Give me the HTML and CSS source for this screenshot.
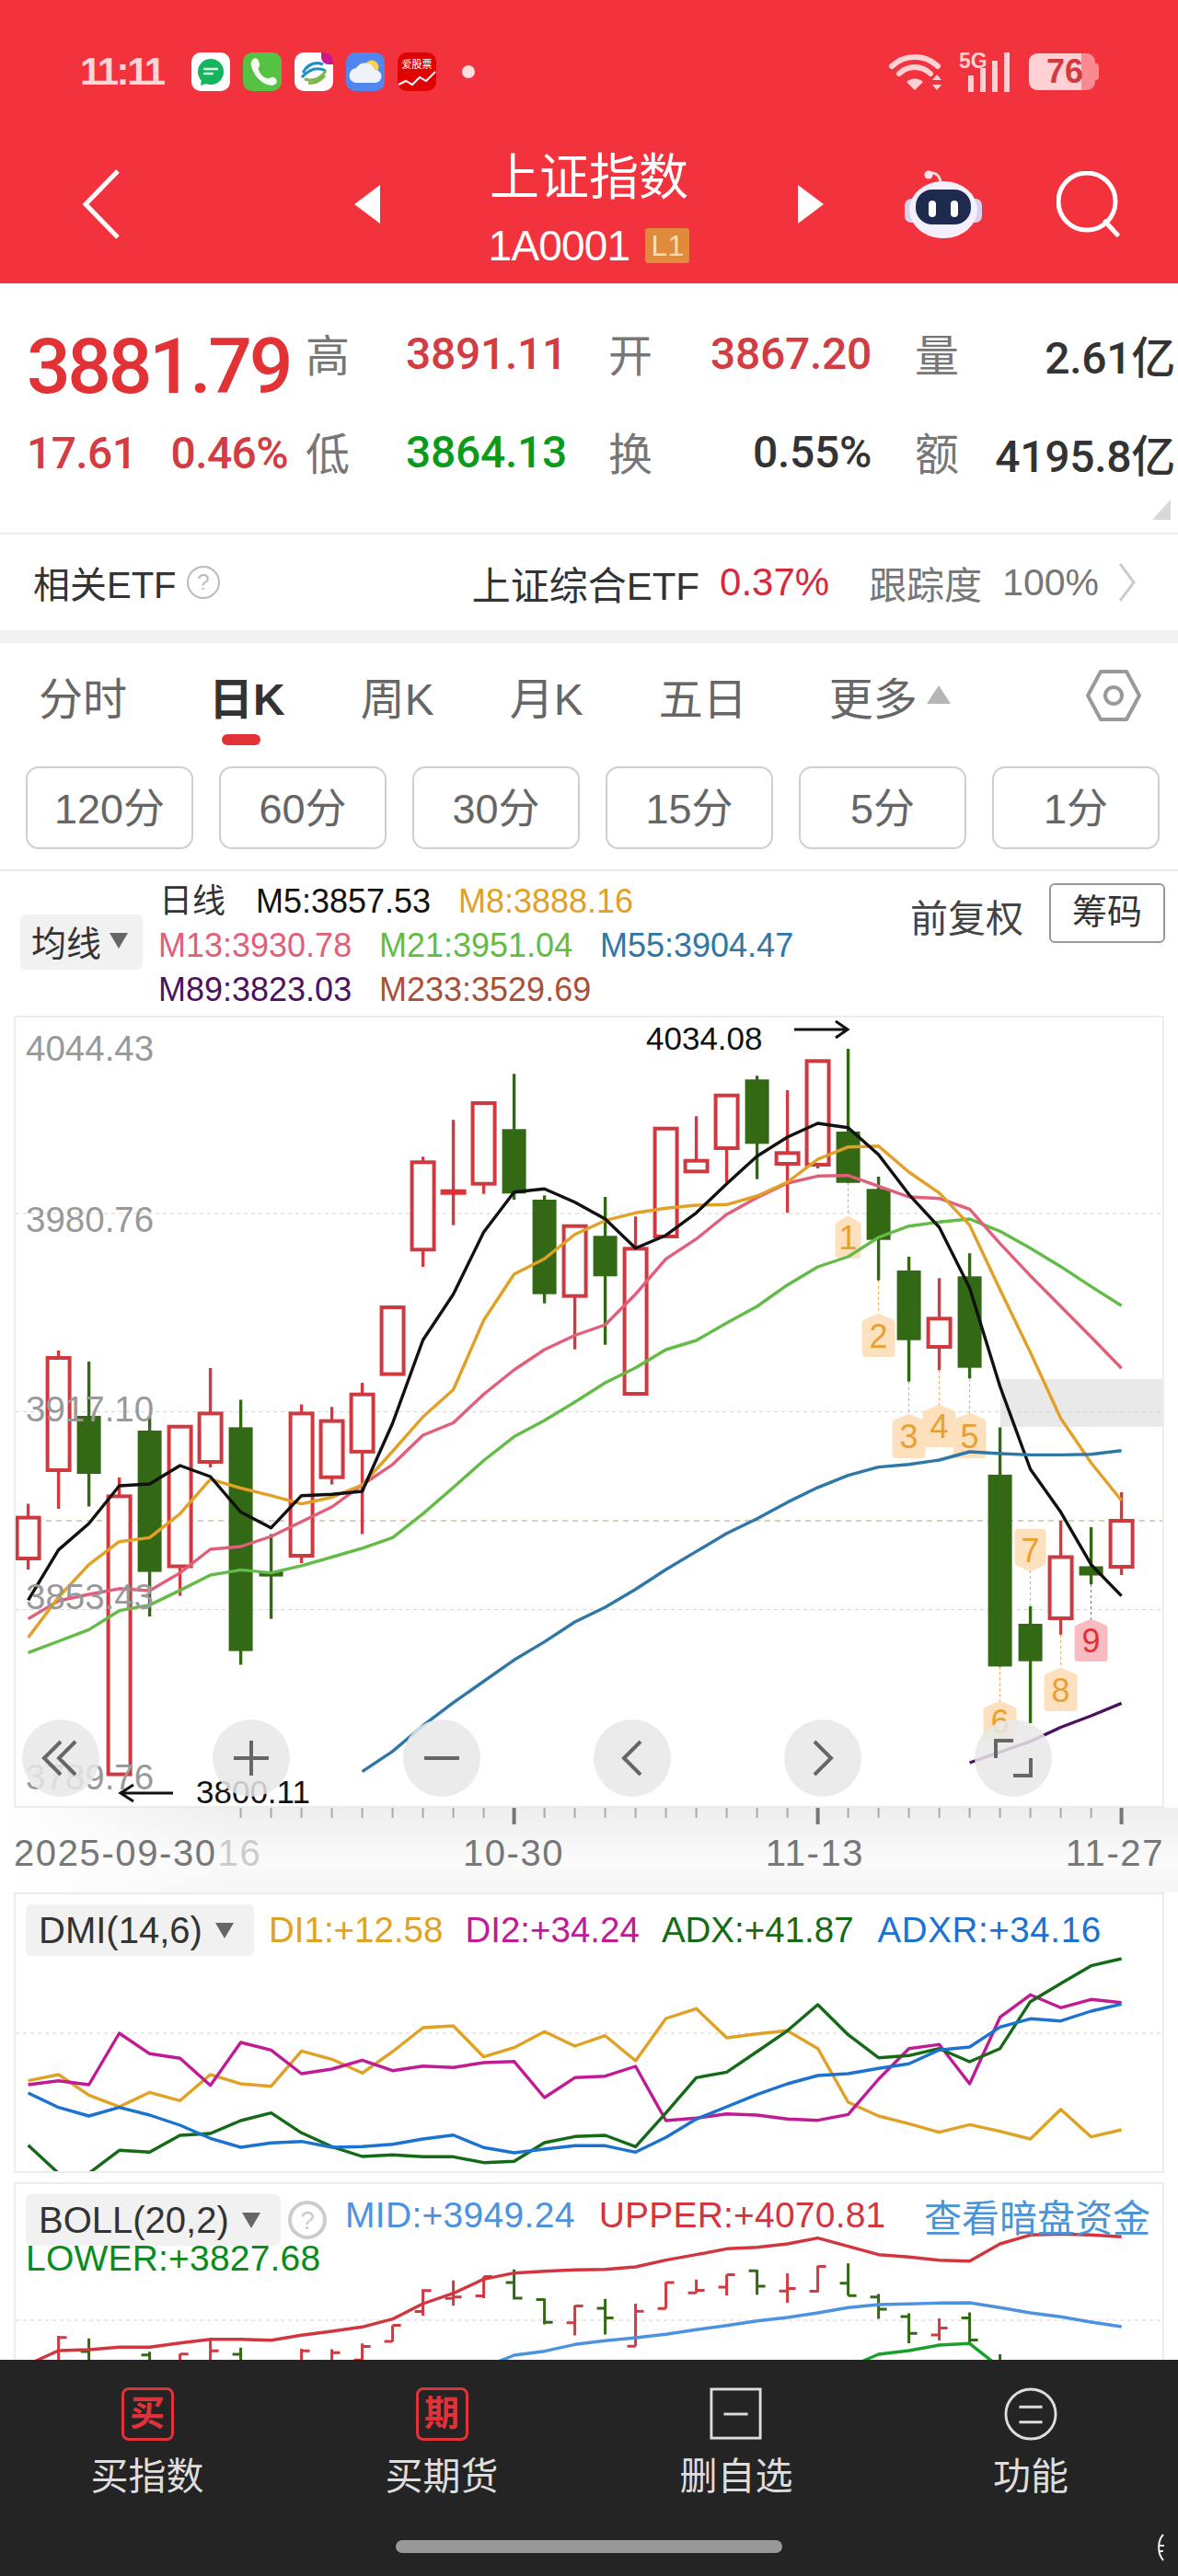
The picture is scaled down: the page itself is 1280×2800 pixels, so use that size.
FILE: index.html
```html
<!DOCTYPE html>
<html lang="zh-CN">
<head>
    <meta charset="UTF-8">
    <meta name="viewport" content="width=device-width, initial-scale=1.0">
    <title>上证指数</title>
    <link rel="stylesheet" href="styles.css">
</head>
<body>
<div class="page">

    <header class="top">
        <div class="status">
            <span class="time">11:11</span>
            <div class="notify">
                <svg class="app" viewBox="0 0 42 42"><rect width="42" height="42" rx="10" fill="#fff"/><circle cx="21" cy="21" r="14" fill="#14b55c"/><path d="M11 30l-1 6 8-3z" fill="#14b55c"/><path d="M14 18h14M14 23h9" stroke="#d8f5e4" stroke-width="2.4" stroke-linecap="round"/></svg>
                <svg class="app" viewBox="0 0 42 42"><rect width="42" height="42" rx="10" fill="#55c244"/><path d="M11 7c4-2 6 1 7 5 1 3-2 4-1 7 2 5 5 8 9 9 3 1 4-2 7-1 3 1 5 4 3 7-3 3-9 2-14-1-6-4-11-11-13-18-1-3 0-6 2-8z" fill="#f3fbf0"/></svg>
                <svg class="app" viewBox="0 0 42 42"><rect width="42" height="42" rx="10" fill="#fff"/><path d="M29 0h4a9 9 0 0 1 9 9v4h-5a8 8 0 0 1-8-8z" fill="#d0168c"/><path d="M9 22c6-10 14-12 22-9M8 27c8-9 16-12 26-7" fill="none" stroke="#1c8fc4" stroke-width="3"/><path d="M34 20c-6 9-13 12-23 9M33 25c-6 7-11 9-18 8" fill="none" stroke="#7ab648" stroke-width="3"/></svg>
                <svg class="app" viewBox="0 0 42 42"><rect width="42" height="42" rx="10" fill="#4f86f0"/><circle cx="28" cy="16" r="7.5" fill="#f6cf55"/><path d="M12 33a8 8 0 0 1-1-16 11 11 0 0 1 20 2 7 7 0 0 1 1 14z" fill="#eef3fb"/></svg>
                <svg class="app" viewBox="0 0 42 42"><rect width="42" height="42" rx="10" fill="#e00303"/><text class="app-word" x="21" y="17" text-anchor="middle">爱股票</text><path d="M1 35l8-4 7 4 8-8 7 4 10-10" fill="none" stroke="#fff" stroke-width="2"/></svg>
            </div>
            <span class="status-dot"></span>
            <div class="signals">
                <svg class="wifi" viewBox="0 0 58 42"><path d="M3 15a36 36 0 0 1 50 0M11 23a24 24 0 0 1 34 0" fill="none" stroke="#ffd0d4" stroke-width="6" stroke-linecap="round"/><path d="M19 32a13 13 0 0 1 18 0l-9 9z" fill="#ffd0d4"/><path d="M52 24l5 6H47zM52 41l5-6H47z" fill="#ffd0d4"/></svg>
                <svg class="bars" viewBox="0 0 56 44"><text class="bars-word" x="0" y="18">5G</text><path d="M10 44V26h6v18zM23 44V18h6v26zM36 44V10h6v34zM49 44V1h6v43z" fill="#ffd0d4"/></svg>
                <div class="battery"><span class="battery-num">76</span></div>
            </div>
        </div>

        <nav class="bar">
            <div class="bar-left">
                <svg class="back" viewBox="0 0 40 76"><path d="M38 2L3 38l35 36" fill="none" stroke="#fff" stroke-width="5"/></svg>
            </div>
            <div class="switch">
                <span class="tri-left"></span>
                <div class="title">
                    <div class="title-name">上证指数</div>
                    <div class="title-code">1A0001<span class="level">L1</span></div>
                </div>
                <span class="tri-right"></span>
            </div>
            <div class="bar-right">
                <svg class="robot" viewBox="0 0 84 76"><path d="M26 5c6-3 12 1 13 9" fill="none" stroke="#f3dfe4" stroke-width="3"/><circle cx="26" cy="6" r="4.5" fill="#f4e6ea"/><rect x="0" y="32" width="84" height="26" rx="7" fill="#d8d2ee"/><ellipse cx="42" cy="44" rx="37" ry="31" fill="#f3effb"/><rect x="12" y="22" width="60" height="38" rx="18" fill="#1e2a4e"/><rect x="26" y="34" width="8" height="18" rx="4" fill="#fff"/><rect x="50" y="34" width="8" height="18" rx="4" fill="#fff"/></svg>
                <svg class="search" viewBox="0 0 70 72"><circle cx="33" cy="33" r="31" fill="none" stroke="#fff" stroke-width="5"/><path d="M53 55l13 14" stroke="#fff" stroke-width="5" stroke-linecap="round"/></svg>
            </div>
        </nav>
    </header>

    <section class="quote">
        <div class="price">3881.79</div>
        <div class="label">高</div><div class="val up">3891.11</div>
        <div class="label">开</div><div class="val end up">3867.20</div>
        <div class="label">量</div><div class="val last dark">2.61亿</div>

        <div class="change"><span>17.61</span><span>0.46%</span></div>
        <div class="label">低</div><div class="val down">3864.13</div>
        <div class="label">换</div><div class="val end dark">0.55%</div>
        <div class="label">额</div><div class="val last dark">4195.8亿</div>
        <span class="corner"></span>
    </section>

    <section class="etf">
        <div class="etf-left">相关ETF
            <svg class="hint" viewBox="0 0 38 38"><circle cx="19" cy="19" r="17" fill="none" stroke="#bbb" stroke-width="2"/><text class="hint-mark" x="19" y="27" text-anchor="middle">?</text></svg>
        </div>
        <div class="etf-right">
            <span class="etf-name">上证综合ETF</span>
            <span class="etf-pct">0.37%</span>
            <span class="etf-track">跟踪度</span>
            <span class="etf-num">100%</span>
            <svg class="more" viewBox="0 0 20 44"><path d="M2 2l15 20L2 42" fill="none" stroke="#ccc" stroke-width="3"/></svg>
        </div>
    </section>

    <div class="band"></div>

    <section class="tabs">
        <span class="tab first">分时</span>
        <span class="tab active">日K</span>
        <span class="tab">周K</span>
        <span class="tab">月K</span>
        <span class="tab">五日</span>
        <span class="tab wide">更多<i class="tri-up"></i></span>
        <svg class="gear" viewBox="0 0 60 58"><path d="M16 3h28l14 26-14 26H16L2 29z" fill="none" stroke="#999" stroke-width="4" stroke-linejoin="round"/><circle cx="30" cy="29" r="9" fill="none" stroke="#999" stroke-width="4"/></svg>
    </section>

    <section class="periods">
        <span class="period">120分</span>
        <span class="period">60分</span>
        <span class="period">30分</span>
        <span class="period">15分</span>
        <span class="period">5分</span>
        <span class="period">1分</span>
    </section>

    <section class="ma-head">
        <div class="select ma-select">均线<i class="tri-down"></i></div>
        <div class="ma-list">
            <div class="ma-row"><span class="ma-day">日线</span><span class="ma-five t-m5">M5:3857.53</span><span class="t-m8">M8:3888.16</span></div>
            <div class="ma-row"><span class="t-m13">M13:3930.78</span><span class="t-m21">M21:3951.04</span><span class="t-m55">M55:3904.47</span></div>
            <div class="ma-row"><span class="t-m89">M89:3823.03</span><span class="t-m233">M233:3529.69</span></div>
        </div>
        <div class="ma-side">
            <span class="adjust">前复权</span>
            <span class="chips">筹码</span>
        </div>
    </section>

    <section class="frame kline-frame">
        <svg id="kline" class="kline" viewBox="17 1106 1246 857"></svg>
        <div class="tools">
            <span class="tool"><svg viewBox="0 0 44 44"><path d="M22 4L4 22l18 18M38 4L20 22l18 18" fill="none" stroke="#666" stroke-width="4"/></svg></span>
            <span class="tool"><svg viewBox="0 0 44 44"><path d="M22 3v38M3 22h38" fill="none" stroke="#666" stroke-width="4"/></svg></span>
            <span class="tool"><svg viewBox="0 0 44 44"><path d="M3 22h38" fill="none" stroke="#666" stroke-width="4"/></svg></span>
            <span class="tool"><svg viewBox="0 0 44 44"><path d="M31 4L13 22l18 18" fill="none" stroke="#666" stroke-width="4"/></svg></span>
            <span class="tool"><svg viewBox="0 0 44 44"><path d="M13 4l18 18-18 18" fill="none" stroke="#666" stroke-width="4"/></svg></span>
            <span class="tool"><svg viewBox="0 0 44 44"><path d="M22 3H3v19M22 41h19V22" fill="none" stroke="#666" stroke-width="4"/></svg></span>
        </div>
    </section>

    <section class="axis">
        <svg id="ticks" class="ticks" viewBox="0 0 1280 20"></svg>
        <div class="dates">
            <span>2025-09-30<em class="faded">16</em></span>
            <span>10-30</span>
            <span>11-13</span>
            <span>11-27</span>
        </div>
    </section>

    <section class="frame dmi-frame">
        <div class="legend">
            <div class="select dmi-select">DMI(14,6)<i class="tri-down"></i></div>
            <span class="t-di1">DI1:+12.58</span>
            <span class="t-di2">DI2:+34.24</span>
            <span class="t-adx">ADX:+41.87</span>
            <span class="t-adxr">ADXR:+34.16</span>
        </div>
        <svg id="dmi" class="dmi" viewBox="17 2126 1246 234"></svg>
    </section>

    <section class="frame boll-frame">
        <svg id="boll" class="boll" viewBox="17 2374 1246 230"></svg>
        <div class="boll-legend">
            <div class="boll-line">
                <div class="select boll-select">BOLL(20,2)<i class="tri-down"></i></div>
                <svg class="boll-hint" viewBox="0 0 44 44"><circle cx="22" cy="22" r="19" fill="none" stroke="#ccc" stroke-width="4"/><text class="boll-mark" x="22" y="32" text-anchor="middle">?</text></svg>
                <span class="t-mid">MID:+3949.24</span>
                <span class="t-upper">UPPER:+4070.81</span>
                <span class="dark-pool">查看暗盘资金</span>
            </div>
            <div class="t-lower">LOWER:+3827.68</div>
        </div>
    </section>

    <footer class="actions">
        <div class="action">
            <span class="act-box act-red">买</span>
            <span class="act-name">买指数</span>
        </div>
        <div class="action">
            <span class="act-box act-red">期</span>
            <span class="act-name">买期货</span>
        </div>
        <div class="action">
            <svg class="act-icon" viewBox="0 0 60 60"><rect x="2" y="2" width="55" height="55" fill="none" stroke="#ddd" stroke-width="3"/><path d="M16 30h27" stroke="#ddd" stroke-width="3"/></svg>
            <span class="act-name">删自选</span>
        </div>
        <div class="action">
            <svg class="act-icon" viewBox="0 0 60 60"><circle cx="30" cy="30" r="28" fill="none" stroke="#ddd" stroke-width="3"/><path d="M17 22h26M17 39h26" stroke="#ddd" stroke-width="3"/></svg>
            <span class="act-name">功能</span>
        </div>
        <span class="home-bar"></span>
        <svg class="corner-mark" viewBox="0 0 12 32"><path d="M10 2C4 8 3 22 10 30M6 14h5M6 20h4" fill="none" stroke="#eee" stroke-width="2"/></svg>
    </footer>
</div>
<script src="chart.js"></script>
</body>
</html>
```

FILE: styles.css
```css
* {
    box-sizing: border-box;
}

body {
    margin: 0;
    background: #fff;
    font-family: "Liberation Sans", "Noto Sans CJK SC", sans-serif;
}

.page {
    position: relative;
    width: 1280px;
    height: 2800px;
    overflow: hidden;
}

i {
    font-style: normal;
}

/* red header */
.top {
    height: 308px;
    padding-top: 48px;
    background: #f2323c;
}

.status {
    display: flex;
    align-items: center;
    height: 60px;
    padding: 0 90px 0 87px;
}

.time {
    width: 90px;
    font-size: 42px;
    font-weight: bold;
    letter-spacing: -2.4px;
    color: #ffd5d8;
    white-space: nowrap;
}

.notify {
    display: flex;
    gap: 14px;
    margin-left: 31px;
}

.app {
    width: 42px;
    height: 42px;
}

.app-word {
    font-size: 11px;
    fill: #fff;
}

.status-dot {
    width: 14px;
    height: 14px;
    margin-left: 28px;
    border-radius: 50%;
    background: #ffdfe0;
}

.signals {
    display: flex;
    align-items: center;
    margin-left: auto;
}

.wifi {
    width: 58px;
    height: 42px;
}

.bars {
    width: 56px;
    height: 44px;
    margin-left: 18px;
    overflow: visible;
}

.bars-word {
    font-size: 23px;
    font-weight: bold;
    fill: #ffd0d4;
}

.battery {
    position: relative;
    width: 72px;
    height: 40px;
    margin-left: 20px;
    border-radius: 9px;
    background: linear-gradient(90deg, #ffd0d4 0 79%, #f98a90 79%);
    text-align: center;
}

.battery::after {
    content: "";
    position: absolute;
    right: -4px;
    top: 11px;
    width: 4px;
    height: 18px;
    border-radius: 0 3px 3px 0;
    background: #f98a90;
}

.battery-num {
    padding-left: 6px;
    font-size: 36px;
    line-height: 40px;
    font-weight: bold;
    color: #d23a42;
}

.bar {
    display: grid;
    grid-template-columns: 385px 510px 1fr;
    align-items: center;
    height: 200px;
    padding-top: 28px;
}

.bar-left {
    padding-left: 90px;
}

.back {
    display: block;
    width: 40px;
    height: 76px;
}

.switch {
    display: flex;
    align-items: center;
    justify-content: space-between;
}

.tri-left,
.tri-right {
    width: 0;
    height: 0;
    border-top: 21px solid transparent;
    border-bottom: 21px solid transparent;
}

.tri-left {
    border-right: 28px solid #fff;
}

.tri-right {
    border-left: 28px solid #fff;
}

.title {
    margin-top: 16px;
    color: #fff;
    text-align: center;
}

.title-name {
    font-size: 54px;
    line-height: 68px;
}

.title-code {
    display: flex;
    align-items: center;
    justify-content: center;
    margin-top: 6px;
    height: 68px;
    font-size: 46px;
    letter-spacing: -0.8px;
}

.level {
    width: 48px;
    height: 38px;
    margin-left: 17px;
    border-radius: 3px;
    background: #e08a3c;
    font-size: 32px;
    line-height: 38px;
    letter-spacing: 0;
    text-align: center;
    color: #f8dcb6;
}

.bar-right {
    display: flex;
    align-items: center;
    padding-left: 88px;
}

.robot {
    width: 84px;
    height: 76px;
}

.search {
    width: 70px;
    height: 72px;
    margin-left: 81px;
}

/* quote table */
.quote {
    position: relative;
    display: grid;
    grid-template-columns: 303px 109px 220px 60px 273px 60px 223px;
    grid-auto-rows: 107px;
    align-items: center;
    height: 273px;
    padding: 24px 0 0 29px;
    border-bottom: 2px solid #eee;
}

.price {
    height: 107px;
    font-family: Roboto, "Liberation Sans", sans-serif;
    font-size: 84px;
    line-height: 133px;
    font-weight: 500;
    letter-spacing: -3.4px;
    color: #e23236;
    white-space: nowrap;
}

.change {
    display: flex;
    justify-content: space-between;
    width: 284px;
    font-family: Roboto, "Liberation Sans", sans-serif;
    font-size: 48px;
    letter-spacing: -0.6px;
    font-weight: 500;
    color: #d23c42;
}

.label {
    margin-top: -5px;
    font-size: 48px;
    color: #777;
}

.val {
    margin-top: -2px;
    font-family: Roboto, "Liberation Sans", "Noto Sans CJK SC", sans-serif;
    font-size: 48px;
    font-weight: 500;
    letter-spacing: -0.3px;
    white-space: nowrap;
}

.val.end {
    padding-right: 47px;
    text-align: right;
}

.val.last {
    text-align: right;
}

.up {
    color: #d23c42;
}

.down {
    color: #0a9a1c;
}

.dark {
    color: #333;
}

.corner {
    position: absolute;
    right: 8px;
    bottom: 14px;
    width: 0;
    height: 0;
    border-left: 20px solid transparent;
    border-bottom: 22px solid #d8d8d8;
}

/* related etf */
.etf {
    display: flex;
    align-items: center;
    justify-content: space-between;
    height: 104px;
    padding: 0 45px 0 36px;
    font-size: 40px;
}

.etf-left {
    display: flex;
    align-items: center;
    color: #333;
}

.hint {
    width: 38px;
    height: 38px;
    margin-left: 10px;
}

.hint-mark {
    font-size: 24px;
    fill: #bbb;
}

.etf-right {
    display: flex;
    align-items: center;
}

.etf-name {
    font-size: 42px;
    color: #333;
}

.etf-pct {
    margin-left: 22px;
    font-size: 42px;
    color: #d8283c;
}

.etf-track {
    margin-left: 43px;
    font-size: 41px;
    color: #777;
}

.etf-num {
    margin-left: 22px;
    font-size: 41px;
    color: #777;
}

.more {
    width: 20px;
    height: 44px;
    margin-left: 21px;
}

.band {
    height: 14px;
    background: #f3f3f3;
}

/* period tabs */
.tabs {
    display: flex;
    align-items: center;
    gap: 82px;
    height: 134px;
    padding: 0 0 20px 42px;
    font-size: 48px;
    color: #666;
}

.tab {
    position: relative;
    white-space: nowrap;
}

.tab.active {
    margin-left: 7px;
    font-weight: bold;
    color: #333;
}

.tab.active::after {
    content: "";
    position: absolute;
    left: 14px;
    bottom: -19px;
    width: 42px;
    height: 12px;
    border-radius: 6px;
    background: #e13238;
}

.tab.wide {
    margin-left: 7px;
}

.tri-up {
    display: inline-block;
    vertical-align: 12px;
    width: 0;
    height: 0;
    margin-left: 10px;
    border-left: 13px solid transparent;
    border-right: 13px solid transparent;
    border-bottom: 20px solid #b5b5b5;
}

.gear {
    width: 60px;
    height: 58px;
    margin-left: auto;
    margin-right: 40px;
}

.periods {
    display: flex;
    gap: 28px;
    height: 114px;
    padding: 0 20px 22px 28px;
    border-bottom: 2px solid #e8e8e8;
}

.period {
    flex: 1;
    border: 2px solid #cfcfcf;
    border-radius: 14px;
    font-size: 45px;
    line-height: 90px;
    text-align: center;
    color: #666;
}

/* moving average legend */
.ma-head {
    position: relative;
    display: flex;
    height: 157px;
    padding: 9px 14px 0 22px;
}

.select {
    display: flex;
    align-items: center;
    border-radius: 6px;
    background: #f1f1f1;
    color: #333;
    white-space: nowrap;
}

.tri-down {
    display: inline-block;
    width: 0;
    height: 0;
    border-left: 10px solid transparent;
    border-right: 10px solid transparent;
    border-top: 17px solid #666;
}

.ma-select {
    width: 133px;
    height: 60px;
    margin-top: 38px;
    padding: 0 0 4px 12px;
    font-size: 38px;
}

.ma-select .tri-down {
    margin-left: 9px;
}

.ma-list {
    margin-left: 17px;
    font-size: 36px;
    line-height: 48px;
}

.ma-row {
    display: flex;
}

.ma-row span {
    width: 240px;
    white-space: nowrap;
}

.ma-row .ma-day {
    width: 106px;
    padding-left: 1px;
    color: #333;
}

.ma-row .ma-five {
    width: 220px;
}

.t-m5 { color: #111; }
.t-m8 { color: #e2a126; }
.t-m13 { color: #e25f7b; }
.t-m21 { color: #63bb48; }
.t-m55 { color: #2f78a6; }
.t-m89 { color: #4c1160; }
.t-m233 { color: #a9503a; }

.ma-side {
    display: flex;
    align-items: flex-start;
    margin-left: auto;
}

.adjust {
    margin-top: 9px;
    font-size: 41px;
    color: #444;
}

.chips {
    width: 126px;
    height: 65px;
    margin: 4px 0 0 28px;
    border: 2px solid #999;
    border-radius: 6px;
    font-size: 38px;
    line-height: 59px;
    text-align: center;
    color: #333;
}

/* chart frames */
.frame {
    position: relative;
    margin: 0 15px;
    border: 2px solid #ececec;
}

.kline-frame {
    height: 861px;
}

.kline,
.dmi,
.boll {
    display: block;
    width: 1246px;
}

.kline {
    height: 857px;
}

.dmi {
    height: 234px;
}

.boll {
    height: 230px;
}

.tools {
    position: absolute;
    left: 7px;
    bottom: 10px;
    display: flex;
    gap: 123px;
}

.tool {
    display: flex;
    align-items: center;
    justify-content: center;
    width: 84px;
    height: 84px;
    border-radius: 50%;
    background: rgba(232, 232, 232, 0.85);
}

.tool svg {
    width: 44px;
    height: 44px;
}

/* x axis */
.axis {
    height: 92px;
    padding: 0 15px;
    background:
        linear-gradient(90deg, #fff, rgba(255, 255, 255, 0) 20%),
        linear-gradient(180deg, #eee, #fafafa 60%, #f6f6f6);
}

.ticks {
    display: block;
    width: 1280px;
    height: 20px;
    margin-left: -15px;
}

.dates {
    display: flex;
    justify-content: space-between;
    margin-top: 6px;
    font-size: 40px;
    line-height: 46px;
    letter-spacing: 1.6px;
    color: #777;
}

.faded {
    margin-left: 1px;
    font-style: normal;
    color: #ccc;
}

/* dmi */
.dmi-frame {
    height: 305px;
}

.legend {
    display: flex;
    align-items: center;
    gap: 24px;
    height: 67px;
    padding: 11px 0 0 11px;
    font-size: 38.5px;
    white-space: nowrap;
}

.dmi-select {
    width: 248px;
    height: 56px;
    margin-right: -8px;
    padding-left: 14px;
    font-size: 40px;
}

.dmi-select .tri-down {
    margin-left: 14px;
}

.t-di1 { color: #e0a224; }
.t-di2 { color: #c01b94; }
.t-adx { color: #146a17; }
.t-adxr {
    margin-left: 2px;
    letter-spacing: 0.6px;
    color: #1b72cf;
}

/* boll */
.boll-frame {
    margin-top: 10px;
    height: 300px;
}

.boll-legend {
    position: absolute;
    left: 11px;
    right: 13px;
    top: 11px;
    font-size: 39px;
    white-space: nowrap;
}

.boll-line {
    display: flex;
    align-items: center;
    height: 56px;
}

.boll-select {
    width: 277px;
    height: 56px;
    padding-left: 14px;
    font-size: 40px;
}

.boll-select .tri-down {
    margin-left: 14px;
}

.boll-hint {
    width: 44px;
    height: 44px;
    margin-left: 7px;
}

.boll-mark {
    font-size: 28px;
    fill: #ccc;
}

.t-mid {
    margin: -10px 0 0 19px;
    letter-spacing: 0.3px;
    color: #4d92df;
}

.t-upper {
    margin: -10px 0 0 26px;
    letter-spacing: 0.2px;
    color: #d1353d;
}

.dark-pool {
    margin: -10px 0 0 auto;
    font-size: 41px;
    color: #4a93d6;
}

.t-lower {
    margin-top: -8px;
    line-height: 44px;
    letter-spacing: 0.2px;
    color: #0a8c1c;
}

/* bottom actions */
.actions {
    position: absolute;
    left: 0;
    bottom: 0;
    display: grid;
    grid-template-columns: repeat(4, 320px);
    width: 1280px;
    height: 235px;
    padding-top: 30px;
    background: #242424;
}

.action {
    display: flex;
    flex-direction: column;
    align-items: center;
}

.act-box {
    width: 57px;
    height: 58px;
    border: 3px solid #e0323a;
    border-radius: 8px;
    font-size: 38px;
    line-height: 50px;
    font-weight: bold;
    text-align: center;
    color: #e0323a;
}

.act-icon {
    width: 60px;
    height: 58px;
}

.act-name {
    margin-top: 13px;
    font-size: 41px;
    line-height: 52px;
    color: #ddd;
}

.home-bar {
    position: absolute;
    left: 430px;
    bottom: 25px;
    width: 420px;
    height: 14px;
    border-radius: 7px;
    background: #999;
}

.corner-mark {
    position: absolute;
    right: 14px;
    bottom: 15px;
    width: 12px;
    height: 32px;
}

/* svg parts built in chart.js */
.grid { stroke: #d4d4d4; stroke-width: 1; stroke-dasharray: 4 4; }
.last-price { stroke: #b5a070; stroke-width: 1.2; stroke-dasharray: 6 5; }
.gray-band { fill: #e9e9e9; }
.wick-red { stroke: #d03a40; stroke-width: 3.4; }
.wick-green { stroke: #336814; stroke-width: 3.4; }
.body-red { fill: #fff; stroke: #cf3a40; stroke-width: 4; }
.body-full { fill: #e13036; }
.body-green { fill: #336814; }
.line { fill: none; stroke-width: 3.4; stroke-linejoin: round; }
.l-m5 { stroke: #111; }
.l-m8 { stroke: #e2a126; }
.l-m13 { stroke: #e25f7b; }
.l-m21 { stroke: #63bb48; }
.l-m55 { stroke: #2f78a6; }
.l-m89 { stroke: #4c1160; }
.l-di1 { stroke: #e0a224; }
.l-di2 { stroke: #c01b94; }
.l-adx { stroke: #146a17; }
.l-adxr { stroke: #1b72cf; }
.l-upper { stroke: #d1353d; }
.l-mid { stroke: #4d92df; }
.l-lower { stroke: #19a02a; }
.tag-link { stroke: #e8a040; stroke-width: 1; stroke-dasharray: 3 3; }
.tag-link.hot { stroke: #c44; }
.tag { fill: #fde0bd; stroke: #fde0bd; stroke-width: 8; stroke-linejoin: round; }
.tag.hot { fill: #f8bcc0; stroke: #f8bcc0; }
.tag-num { font-size: 36px; fill: #e8a030; text-anchor: middle; }
.tag-num.hot { fill: #e03038; }
.axis-price { font-size: 38.5px; fill: #999; }
.extreme { font-size: 35px; fill: #111; }
.arrow { fill: none; stroke: #111; stroke-width: 3; }
.tick { stroke: #aaa; stroke-width: 2; }
.tick.major { stroke: #777; stroke-width: 4; }
.bar-red { stroke: #d03a40; stroke-width: 3; fill: none; }
.bar-green { stroke: #336814; stroke-width: 3; fill: none; }
```

FILE: chart.js
```javascript
// x of candle number i, same in all three charts
function cx(i) {
    return 30.6 + 33 * i;
}

// [high, low, body top, body bottom, kind]
const candles = [
    [1634.6, 1706, 1649.6, 1694, "r"], [1468, 1640, 1476, 1598, "r"], [1480, 1637.5, 1539, 1602, "g"],
    [1606, 1929, 1626.4, 1928.6, "r"], [1540, 1757, 1555, 1708.6, "g"], [1550, 1734.6, 1550.7, 1702.5, "r"],
    [1487, 1595, 1536.4, 1589, "r"], [1521.4, 1809.6, 1551.4, 1794.6, "g"], [1667.5, 1759.6, 1708, 1713.6, "g"],
    [1526.4, 1699, 1536.4, 1691, "r"], [1529.3, 1613.6, 1544.6, 1605.7, "r"], [1503, 1667.5, 1515.7, 1577.9, "r"],
    [1421, 1494, 1421, 1493.6, "r"], [1257.3, 1377, 1263.3, 1358.3, "r"], [1217.3, 1331.7, 1292.7, 1298.7, "f"],
    [1199, 1297.7, 1199, 1286.7, "r"], [1167.3, 1304, 1227.3, 1297.3, "g"], [1299.3, 1416.7, 1304, 1406.7, "g"],
    [1331, 1466.7, 1332.7, 1408.7, "r"], [1301, 1461.7, 1343.3, 1387.3, "g"], [1322.3, 1515, 1357.3, 1515, "r"],
    [1225, 1344, 1226.7, 1344, "r"], [1213.3, 1274.3, 1261.7, 1273.3, "r"], [1190.7, 1285, 1190.7, 1248, "r"],
    [1169.3, 1281.7, 1173.3, 1243.3, "g"], [1185, 1318.3, 1253.3, 1265, "r"], [1151.7, 1270, 1153.3, 1266, "r"],
    [1140, 1285.7, 1230, 1285.7, "g"], [1279, 1391.7, 1292.3, 1347.7, "g"], [1366, 1501.7, 1381, 1456.7, "g"],
    [1389.3, 1489.3, 1433.3, 1464, "r"], [1362.3, 1498.3, 1387.3, 1486.7, "g"], [1551.4, 1811.4, 1602.9, 1811.4, "g"],
    [1746, 1873, 1765, 1805.7, "g"], [1653, 1776.8, 1692.5, 1759, "r"], [1660, 1722, 1702.5, 1712.5, "g"],
    [1622, 1712, 1653, 1703, "r"]
];

const maLines = {
    "l-m21": [1796.4, 1784, 1771.4, 1750.7, 1744.6, 1728.6, 1712, 1706.4, 1709.6, 1701.8, 1692.5, 1682.9, 1671.4, 1645.4, 1616.8, 1587.5, 1561.6, 1544, 1524, 1503, 1486.7, 1467, 1457, 1438, 1420, 1396.7, 1377, 1366, 1345, 1332.7, 1328.3, 1325, 1338.3, 1356.7, 1376.7, 1398.3, 1419.3],
    "l-m13": [1759.6, 1740, 1733, 1726.8, 1729, 1709.6, 1684, 1681, 1670, 1654, 1638, 1614, 1591.8, 1560, 1546.5, 1515.5, 1489, 1467, 1451.5, 1440, 1406.7, 1368.3, 1346.7, 1320, 1301.7, 1286, 1278.3, 1277.7, 1289.3, 1301, 1302.7, 1314.3, 1351.7, 1386.7, 1420, 1453.3, 1487.3],
    "l-m8": [1780, 1736, 1700.7, 1675.7, 1671.4, 1645.4, 1607.9, 1617.5, 1625.7, 1634.6, 1627.5, 1614, 1577.5, 1540, 1510.5, 1435, 1385, 1368.3, 1341.7, 1326.7, 1318.3, 1313.3, 1310, 1309.3, 1300, 1285, 1260, 1246.7, 1245.7, 1274, 1296.7, 1331.7, 1401.7, 1470, 1541.7, 1590, 1631],
    "l-m5": [1739.3, 1684.6, 1656, 1615, 1613, 1593, 1605, 1643.6, 1660.7, 1625.7, 1624.3, 1621, 1547, 1456.5, 1406.7, 1339.3, 1295.7, 1292.3, 1306.7, 1325, 1356.7, 1342.7, 1318.3, 1286.7, 1256.7, 1236, 1221, 1225.7, 1255, 1298.3, 1334, 1400, 1507, 1597, 1643.6, 1700.7, 1734.6]
};

// these two start later than the first candle
const blueLine = [1925.7, 1903.6, 1875.7, 1850.7, 1827.5, 1804.3, 1784.6, 1763, 1747, 1727.5, 1706, 1686.4, 1666.8, 1650.7, 1632.9, 1616.8, 1603.6, 1594.6, 1591.8, 1587, 1578, 1580, 1581.4, 1581.4, 1580.7, 1576.8];
const purpleLine = [1916, 1904.3, 1892.9, 1877.5, 1865, 1851.4];

// [number, candle, link from, top, bottom, half width, points down]
const tags = [
    [1, 27, 1285.7, 1326, 1364, 10, false],
    [2, 28, 1391.7, 1432, 1471, 14, false],
    [3, 29, 1501.7, 1541, 1581, 14, false],
    [4, 30, 1489.3, 1531, 1569, 14, false],
    [5, 31, 1498.3, 1540, 1581, 14, false],
    [6, 32, 1811.4, 1853, 1889, 14, false],
    [7, 33, 1746, 1666, 1704, 13, true],
    [8, 34, 1776.8, 1817, 1856, 14, false],
    [9, 35, 1722, 1764, 1802, 14, false]
];

const priceLabels = [["4044.43", 1153], ["3980.76", 1339], ["3917.10", 1545], ["3853.43", 1749], ["3789.76", 1945]];

function polyline(cls, ys, first) {
    const pts = ys.map((y, n) => cx(first + n).toFixed(1) + "," + y).join(" ");
    return `<polyline class="line ${cls}" points="${pts}"/>`;
}

function hline(cls, y) {
    return `<line class="${cls}" x1="17" x2="1263" y1="${y}" y2="${y}"/>`;
}

function drawTag(t) {
    const x = cx(t[1]);
    const hot = t[0] === 9 ? " hot" : "";
    const top = t[3], bot = t[4], w = t[5];
    const linkEnd = t[6] ? bot : top;
    const linkStart = t[2];
    const shape = t[6]
        ? `${x - w},${top} ${x + w},${top} ${x + w},${bot - 6} ${x},${bot} ${x - w},${bot - 6}`
        : `${x},${top} ${x + w},${top + 6} ${x + w},${bot} ${x - w},${bot} ${x - w},${top + 6}`;
    return `<line class="tag-link${hot}" x1="${x}" x2="${x}" y1="${linkStart}" y2="${linkEnd}"/>`
        + `<polygon class="tag${hot}" points="${shape}"/>`
        + `<text class="tag-num${hot}" x="${x}" y="${(top + bot) / 2 + 13}">${t[0]}</text>`;
}

function drawCandle(c, i) {
    const x = cx(i);
    const kind = c[4] === "g" ? "green" : "red";
    let s = `<line class="wick-${kind}" x1="${x}" x2="${x}" y1="${c[0]}" y2="${c[1]}"/>`;
    if (c[4] === "g") {
        s += `<rect class="body-green" x="${x - 13}" y="${c[2]}" width="26" height="${c[3] - c[2]}"/>`;
    } else if (c[4] === "f") {
        s += `<rect class="body-full" x="${x - 14}" y="${c[2]}" width="28" height="${c[3] - c[2]}"/>`;
    } else {
        s += `<rect class="body-red" x="${x - 12}" y="${c[2]}" width="24" height="${c[3] - c[2]}"/>`;
    }
    return s;
}

function drawKline() {
    let s = `<rect class="gray-band" x="1087" y="1499" width="176" height="52"/>`;
    s += hline("grid", 1319) + hline("grid", 1534.6) + hline("grid", 1749.6);
    s += hline("last-price", 1653);
    s += tags.map(drawTag).join("");
    s += candles.map(drawCandle).join("");
    Object.keys(maLines).forEach(function (k) {
        s += polyline(k, maLines[k], 0);
    });
    s += polyline("l-m55", blueLine, 11);
    s += polyline("l-m89", purpleLine, 31);
    priceLabels.forEach(function (p) {
        s += `<text class="axis-price" x="28" y="${p[1]}">${p[0]}</text>`;
    });
    s += `<text class="extreme" x="702" y="1141">4034.08</text>`;
    s += `<path class="arrow" d="M863 1119h58M908 1110l13 9-13 9"/>`;
    s += `<text class="extreme" x="213" y="1960">3800.11</text>`;
    s += `<path class="arrow" d="M188 1949h-57M145 1940l-14 9 14 9"/>`;
    document.getElementById("kline").innerHTML = s;
}

function drawTicks() {
    let s = "";
    for (let i = 7; i < candles.length; i++) {
        const major = i === 16 || i === 26 || i === 36;
        s += `<line class="tick${major ? " major" : ""}" x1="${cx(i)}" x2="${cx(i)}" y1="0" y2="${major ? 18 : 11}"/>`;
    }
    document.getElementById("ticks").innerHTML = s;
}

function drawDmi() {
    // read off as pixels of the chart, 3 to 1 above y = 2000
    const raw = {
        "l-di1": [785, 765, 832, 870, 823, 850, 765, 795, 803, 688, 715, 760, 690, 612, 606, 707, 677, 625, 672, 638, 720, 582, 550, 645, 632, 622, 680, 855, 900, 925, 953, 928, 950, 975, 878, 968, 945],
        "l-di2": [798, 785, 798, 630, 697, 712, 800, 660, 685, 762, 747, 718, 752, 737, 742, 726, 722, 840, 775, 770, 738, 915, 907, 893, 897, 910, 914, 895, 780, 680, 667, 795, 578, 505, 547, 520, 530],
        "l-adx": [995, 1087, 1087, 1012, 1018, 963, 957, 915, 890, 955, 1000, 1032, 1027, 1033, 1033, 1052, 1048, 987, 967, 963, 1000, 890, 775, 757, 690, 622, 537, 635, 710, 703, 680, 723, 680, 527, 468, 410, 387],
        "l-adxr": [825, 872, 900, 872, 897, 930, 973, 1002, 988, 983, 1002, 1000, 992, 975, 962, 1003, 1020, 1008, 997, 997, 1018, 970, 910, 870, 830, 795, 768, 762, 745, 730, 685, 675, 610, 583, 590, 558, 535]
    };
    let s = hline("grid", 2210);
    Object.keys(raw).forEach(function (k) {
        s += polyline(k, raw[k].map(v => +(2000 + v / 3).toFixed(1)), 0);
    });
    document.getElementById("dmi").innerHTML = s;
}

function drawBoll() {
    const upper = [630, 585, 582, 574, 574, 560, 548, 548, 551, 535, 522, 508, 482, 432, 398, 352, 332, 326, 322, 320, 312, 290, 272, 253, 248, 237, 218, 245, 272, 280, 290, 293, 237, 208, 205, 208, 214];
    const mid = [640, 600, 587, 565, 553, 543, 532, 517, 503, 488, 477, 462, 445, 435, 433, 430, 429, 445, 462, 475, 492, 507];
    const lower = [640, 597, 585, 567, 562, 640];
    const toY = v => +(2360 + v / 3).toFixed(1);
    let s = hline("grid", 2522);
    candles.forEach(function (c, i) {
        const y = v => +(2463 + (v - 1151.7) * 0.24).toFixed(1);
        const x = cx(i);
        const open = c[4] === "g" ? c[2] : c[3];
        const close = c[4] === "g" ? c[3] : c[2];
        const cls = c[4] === "g" ? "bar-green" : "bar-red";
        s += `<path class="${cls}" d="M${x} ${y(c[0])}V${y(c[1])}M${x - 9} ${y(open)}H${x}M${x} ${y(close)}H${x + 9}"/>`;
    });
    s += polyline("l-upper", upper.map(toY), 0);
    s += polyline("l-mid", mid.map(toY), 15);
    s += polyline("l-lower", lower.map(toY), 27);
    document.getElementById("boll").innerHTML = s;
}

drawKline();
drawTicks();
drawDmi();
drawBoll();
```
